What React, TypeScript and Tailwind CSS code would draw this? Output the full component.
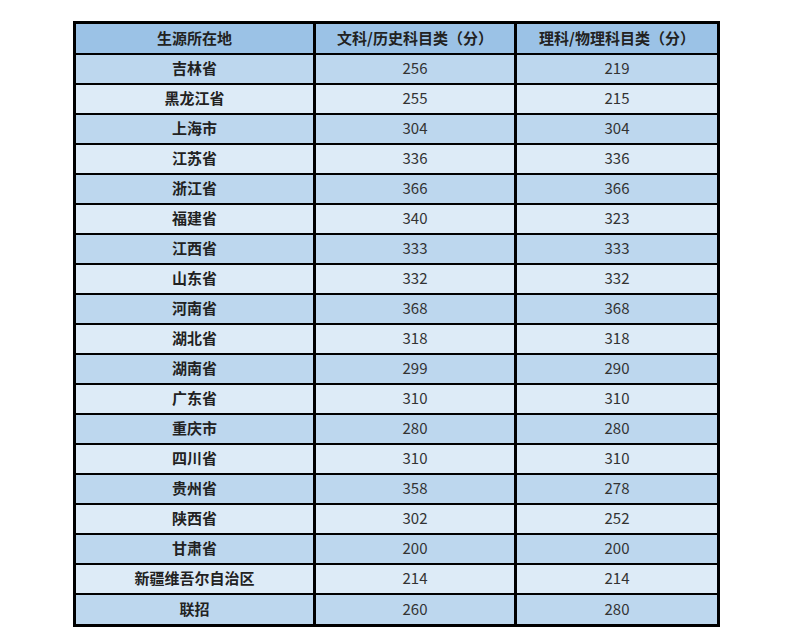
const rows: [string, string, string][] = [
  ["吉林省", "256", "219"],
  ["黑龙江省", "255", "215"],
  ["上海市", "304", "304"],
  ["江苏省", "336", "336"],
  ["浙江省", "366", "366"],
  ["福建省", "340", "323"],
  ["江西省", "333", "333"],
  ["山东省", "332", "332"],
  ["河南省", "368", "368"],
  ["湖北省", "318", "318"],
  ["湖南省", "299", "290"],
  ["广东省", "310", "310"],
  ["重庆市", "280", "280"],
  ["四川省", "310", "310"],
  ["贵州省", "358", "278"],
  ["陕西省", "302", "252"],
  ["甘肃省", "200", "200"],
  ["新疆维吾尔自治区", "214", "214"],
  ["联招", "260", "280"],
];

const cell = "border-x-[3px] border-y-2 border-black text-center p-0";

export default function App() {
  return (
    <div className="min-h-screen bg-white pt-[21px] pl-[73px] font-['Noto_Sans_CJK_SC',sans-serif] text-[15px] text-[#222]">
      <table className="border-collapse border-[3px] border-black w-[647px] table-fixed">
        <colgroup>
          <col className="w-[240px]" />
          <col className="w-[201px]" />
          <col className="w-[203px]" />
        </colgroup>
        <thead>
          <tr className="h-[31px] bg-[#9bc2e6] font-bold">
            <th className={cell}>生源所在地</th>
            <th className={cell}>文科/历史科目类（分）</th>
            <th className={cell}>理科/物理科目类（分）</th>
          </tr>
        </thead>
        <tbody>
          {rows.map(([name, wen, li], i) => (
            <tr
              key={name}
              className={`${i === rows.length - 1 ? "h-[32px]" : "h-[30px]"} ${
                i % 2 === 0 ? "bg-[#bdd7ee]" : "bg-[#ddebf7]"
              }`}
            >
              <td className={`${cell} font-bold`}>{name}</td>
              <td className={`${cell} text-[#333]`}>{wen}</td>
              <td className={`${cell} text-[#333]`}>{li}</td>
            </tr>
          ))}
        </tbody>
      </table>
    </div>
  );
}
